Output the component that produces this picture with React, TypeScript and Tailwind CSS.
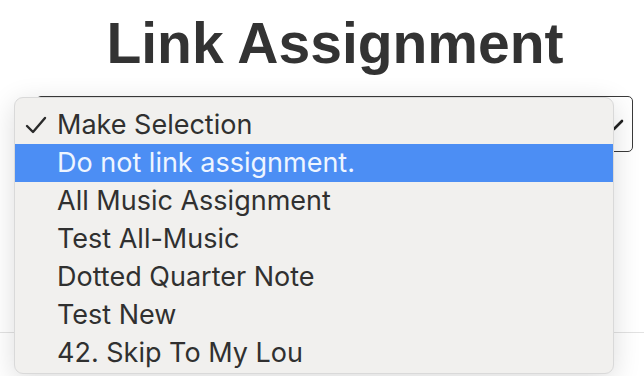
import React from "react";

const items = [
  "Make Selection",
  "Do not link assignment.",
  "All Music Assignment",
  "Test All-Music",
  "Dotted Quarter Note",
  "Test New",
  "42. Skip To My Lou",
];

export default function App() {
  return (
    <div className="relative h-[376px] w-[644px] overflow-hidden bg-white">
      <div className="pt-[15px] pl-[26px] text-center">
        <h1
          className="text-[57px] leading-[57px] font-bold text-[#333333]"
          style={{ fontFamily: '"Liberation Sans", Arial, sans-serif' }}
        >
          Link Assignment
        </h1>
      </div>
      <div className="mt-[24px] ml-[36px] mr-[11px] h-[56px] rounded-[5px] border-[1.5px] border-[#3a3a3a] flex items-center justify-end pr-[8px]">
        <svg width="20" height="14" viewBox="0 0 20 14" className="text-[#222] mt-[2px]">
          <path d="M2 3 L10 11 L18 3" fill="none" stroke="currentColor" strokeWidth="2.6" strokeLinecap="round" strokeLinejoin="round" />
        </svg>
      </div>
      <div className="mt-[180px] h-px bg-[#e2e2e2]" />

      <div
        className="absolute left-[14px] top-[97px] w-[600px] h-[277px] rounded-[9px] bg-[#f1f0ee] border border-[#d9d9d9] shadow-[0_6px_28px_rgba(0,0,0,0.14)] pt-[8px] overflow-hidden"
        style={{ fontFamily: 'Inter, "Noto Sans", sans-serif' }}
      >
        {items.map((t, i) => (
          <div
            key={t}
            className={
              "flex items-center h-[38px] text-[27px] " +
              (i === 1 ? "bg-[#4c8ef4] text-[#eef5ff]" : "text-[#303030]")
            }
          >
            <div className="w-[42px] flex justify-start pl-[10px]">
              {i === 0 && (
                <svg width="22" height="20" viewBox="0 0 22 20">
                  <path d="M2 11 L8 17 L20 3" fill="none" stroke="#2a2a2a" strokeWidth="2.4" strokeLinecap="round" strokeLinejoin="round" />
                </svg>
              )}
            </div>
            <span>{t}</span>
          </div>
        ))}
      </div>
    </div>
  );
}
